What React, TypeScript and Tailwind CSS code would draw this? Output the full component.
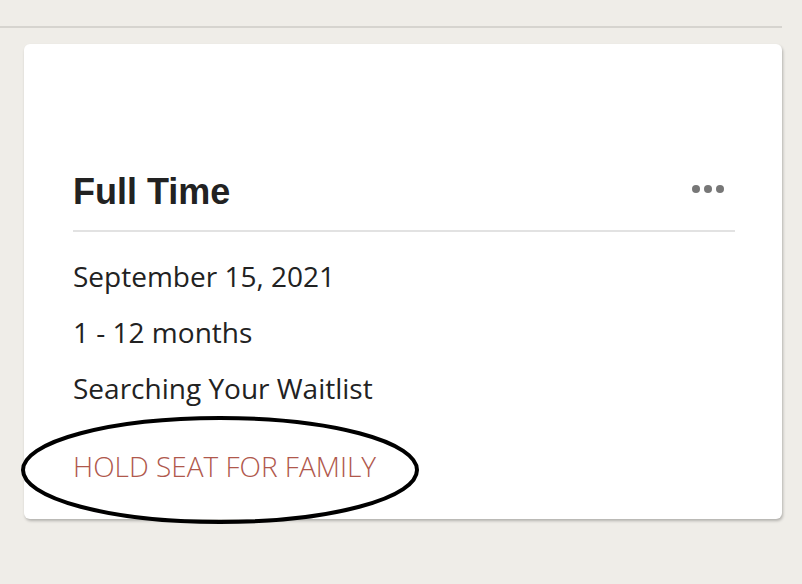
export default function App() {
  return (
    <div className="relative min-h-[584px] w-full bg-[#efede8]">
      <div className="h-[28px] w-[782px] border-b-2 border-[#d6d4cf]" />
      <div className="pl-6 pr-5 pt-4">
        <div className="rounded-md bg-white pb-[38px] pl-[49px] pr-[47px] pt-[128px] shadow-[1px_2px_3px_rgba(0,0,0,0.25)]">
          <div className="flex items-center justify-between border-b-2 border-[#e2e2e2] pb-[18px]">
            <h2 className="font-['Liberation_Sans',Arial,sans-serif] text-[36px] font-bold leading-[40px] text-[#222]">
              Full Time
            </h2>
            <div className="mb-[6px] mr-[11px] flex gap-[4px]">
              <span className="h-[8px] w-[8px] rounded-full bg-[#777]" />
              <span className="h-[8px] w-[8px] rounded-full bg-[#777]" />
              <span className="h-[8px] w-[8px] rounded-full bg-[#777]" />
            </div>
          </div>
          <div className="flex flex-col pt-[16px] font-['Open_Sans',sans-serif] text-[28px] leading-[56px] text-[#222]">
            <p>September 15, 2021</p>
            <p>1 - 12 months</p>
            <p>Searching Your Waitlist</p>
            <button className="mt-[35px] text-left text-[28px] font-light leading-[30px] text-[#b0584c]">
              HOLD SEAT FOR FAMILY
            </button>
          </div>
        </div>
      </div>
      <svg className="pointer-events-none absolute left-[20px] top-[414px]" width="402" height="112">
        <ellipse cx="200" cy="56" rx="197" ry="52" fill="none" stroke="#000" strokeWidth="4" />
      </svg>
    </div>
  );
}
